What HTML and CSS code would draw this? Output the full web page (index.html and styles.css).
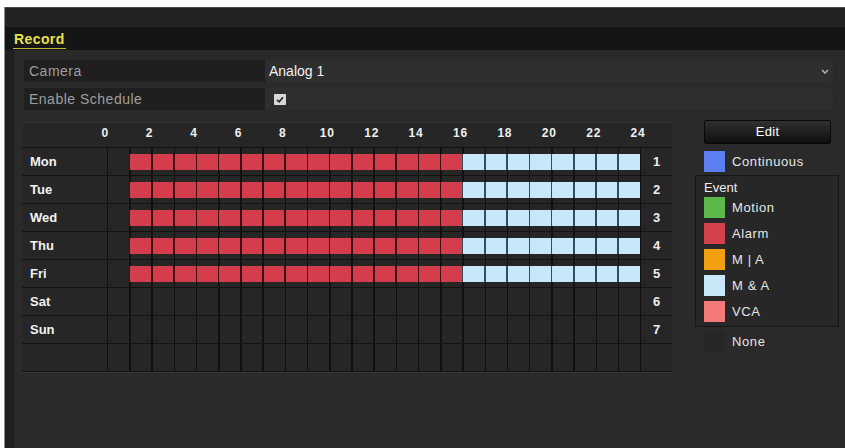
FILE: index.html
```html
<!DOCTYPE html>
<html lang="en">
<head>
<meta charset="utf-8">
<title>Record</title>
<link rel="stylesheet" href="styles.css">
</head>
<body>
<div class="window">
  <div class="topbar"></div>
  <div class="titlebar"><span class="tab">Record</span></div>
  <div class="content">
    <div class="field">
      <span class="flabel">Camera</span>
      <div class="fvalue select">
        <span>Analog 1</span>
        <svg class="caret" width="8" height="5" viewBox="0 0 8 5"><path d="M1 1l3 3 3-3" fill="none" stroke="#bdbdbd" stroke-width="1.4"/></svg>
      </div>
    </div>
    <div class="field">
      <span class="flabel">Enable Schedule</span>
      <div class="fvalue">
        <svg class="check" width="12" height="11" viewBox="0 0 12 11"><rect width="12" height="11" rx="1" fill="#d9d9d9"/><path d="M3 5.8l2.2 2 3.8-4.6" fill="none" stroke="#2a2a2a" stroke-width="1.7"/></svg>
      </div>
    </div>

    <div class="main">
      <div class="schedule">
        <div class="hours">
          <span>0</span><span>2</span><span>4</span><span>6</span><span>8</span><span>10</span><span>12</span><span>14</span><span>16</span><span>18</span><span>20</span><span>22</span><span>24</span>
        </div>
        <div class="row"><span class="day">Mon</span><div class="track"><i class="bar alarm"></i><i class="bar mna"></i></div><span class="num">1</span></div>
        <div class="row"><span class="day">Tue</span><div class="track"><i class="bar alarm"></i><i class="bar mna"></i></div><span class="num">2</span></div>
        <div class="row"><span class="day">Wed</span><div class="track"><i class="bar alarm"></i><i class="bar mna"></i></div><span class="num">3</span></div>
        <div class="row"><span class="day">Thu</span><div class="track"><i class="bar alarm"></i><i class="bar mna"></i></div><span class="num">4</span></div>
        <div class="row"><span class="day">Fri</span><div class="track"><i class="bar alarm"></i><i class="bar mna"></i></div><span class="num">5</span></div>
        <div class="row"><span class="day">Sat</span><div class="track"></div><span class="num">6</span></div>
        <div class="row"><span class="day">Sun</span><div class="track"></div><span class="num">7</span></div>
        <div class="row"><span class="day"></span><div class="track"></div><span class="num"></span></div>
      </div>

      <aside class="legend">
        <div class="edit">Edit</div>
        <div class="item top"><span class="sw continuous"></span>Continuous</div>
        <div class="event">
          <div class="event-title">Event</div>
          <div class="item"><span class="sw motion"></span>Motion</div>
          <div class="item"><span class="sw alarm-sw"></span>Alarm</div>
          <div class="item"><span class="sw m-or-a"></span>M | A</div>
          <div class="item"><span class="sw m-and-a"></span>M &amp; A</div>
          <div class="item"><span class="sw vca"></span>VCA</div>
        </div>
        <div class="item none"><span class="sw blank"></span>None</div>
      </aside>
    </div>
  </div>
</div>
</body>
</html>
```
FILE: styles.css
```css
* { box-sizing: border-box; }

body {
  margin: 0;
  background: #ffffff;
  font-family: "Liberation Sans", Arial, sans-serif;
}

.window {
  margin: 7px 0 0 4px;
  height: 441px;
  border-left: 1px solid #8c8c8c;
  background: #2a2a2a;
  display: flex;
  flex-direction: column;
}

.topbar {
  height: 20px;
  background: #232323;
  border-top: 1px solid #4a4a4a;
}

.titlebar {
  height: 23px;
  background: #151515;
  display: flex;
  align-items: center;
  padding-left: 8px;
}

.tab {
  color: #e8e04e;
  font-size: 14px;
  font-weight: bold;
  letter-spacing: 0.4px;
  line-height: 16px;
  padding: 0 1px 1px;
  border-bottom: 1px solid #bfb53c;
  margin-top: 3px;
}

.content {
  flex: 1;
  border-left: 9px solid #202020;
  padding: 10px 6px 0 8px;
}

/* settings rows */
.field {
  display: flex;
  height: 22px;
  margin: 0 6px 6px 2px;
}

.flabel {
  width: 241px;
  background: #1f1f1f;
  color: #9e9e9e;
  font-size: 14px;
  letter-spacing: 0.5px;
  line-height: 22px;
  padding-left: 5px;
}

.fvalue {
  flex: 1;
  display: flex;
  align-items: center;
  background: #2e2e2e;
  border-radius: 3px;
  padding-left: 4px;
  color: #f2f2f2;
  font-size: 14px;
}

.select { justify-content: space-between; padding-right: 4px; }
.caret { margin-top: 1px; }
.check { margin-left: 5px; }

/* schedule grid + legend */
.main {
  display: flex;
  gap: 23px;
  margin-top: 10px;
}

.schedule {
  width: 650px;
  margin-top: 2px;
  background: #262626;
  border-top: 1px solid #303030;
  border-bottom: 1px solid #383838;
  align-self: flex-start;
}

.hours {
  display: flex;
  height: 25px;
  padding: 3px 0 0 61px;
  color: #efefef;
  font-size: 12px;
  font-weight: bold;
  line-height: 14px;
  border-bottom: 1px solid #121212;
}

.hours span {
  flex: none;
  width: 44.417px;
  text-align: center;
  letter-spacing: 0.8px;
}

.row {
  display: grid;
  grid-template-columns: 85px 533px 32px;
  height: 28px;
  border-bottom: 1px solid #131313;
}

.day {
  color: #f2f2f2;
  font-size: 13px;
  font-weight: bold;
  line-height: 27px;
  padding-left: 8px;
}

.track {
  display: grid;
  grid-template-columns: repeat(24, 1fr);
  align-items: center;
  background: repeating-linear-gradient(to right, #101010 0 1.5px, transparent 1.5px 22.2083px);
}

.bar {
  grid-row: 1;
  height: 16px;
}

.alarm {
  grid-column: 2 / 17;
  background: repeating-linear-gradient(to right, #3a1216 0 1.5px, transparent 1.5px 22.2083px), #d43d4b;
}

.mna {
  grid-column: 17 / 25;
  background: repeating-linear-gradient(to right, #31505e 0 1.5px, transparent 1.5px 22.2083px), #c6e8f8;
}

.num {
  border-left: 1.5px solid #101010;
  color: #eeeeee;
  font-size: 13px;
  font-weight: bold;
  line-height: 27px;
  text-align: center;
}

.legend {
  width: 144px;
  display: flex;
  flex-direction: column;
}

.edit {
  margin-left: 9px;
  width: 127px;
  height: 24px;
  background: linear-gradient(#303030, #0f0f0f);
  border: 1px solid #080808;
  border-radius: 2px;
  color: #ffffff;
  font-size: 13px;
  letter-spacing: 0.3px;
  line-height: 22px;
  text-align: center;
}

.item {
  display: flex;
  align-items: center;
  gap: 7px;
  height: 21px;
  color: #e6e6e6;
  font-size: 13px;
  letter-spacing: 0.6px;
}

.item.top { margin: 7px 0 0 9px; }
.item.none { margin: 4px 0 0 9px; }

.sw {
  flex: none;
  width: 21px;
  height: 21px;
}

.event {
  margin-top: 3px;
  border: 1px solid #161616;
  background: #272727;
  padding: 3px 8px 4px 8px;
}

.event-title {
  height: 18px;
  color: #ededed;
  font-size: 13px;
  line-height: 18px;
}

.event .item + .item { margin-top: 5px; }

.continuous { background: #5b7ff0; }
.motion { background: #5cb84b; }
.alarm-sw { background: #d4404c; }
.m-or-a { background: #f0a010; }
.m-and-a { background: #c6e8f8; }
.vca { background: #f47a7a; }
.blank { background: #262626; }
```
